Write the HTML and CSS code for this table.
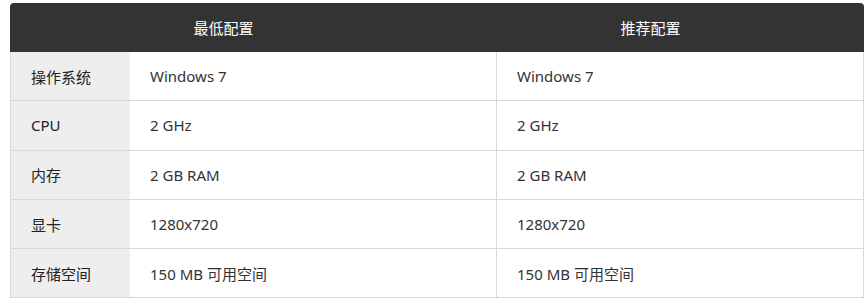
FILE: index.html
```html
<!DOCTYPE html>
<html lang="zh-CN">
<head>
<meta charset="utf-8">
<title>配置需求</title>
<link rel="stylesheet" href="styles.css">
</head>
<body>
<div class="specs">
  <div class="head">
    <div class="head-cell">最低配置</div>
    <div class="head-cell">推荐配置</div>
  </div>
  <div class="row">
    <div class="label">操作系统</div>
    <div class="val">Windows 7</div>
    <div class="val">Windows 7</div>
  </div>
  <div class="row">
    <div class="label">CPU</div>
    <div class="val">2 GHz</div>
    <div class="val">2 GHz</div>
  </div>
  <div class="row">
    <div class="label">内存</div>
    <div class="val">2 GB RAM</div>
    <div class="val">2 GB RAM</div>
  </div>
  <div class="row">
    <div class="label">显卡</div>
    <div class="val">1280x720</div>
    <div class="val">1280x720</div>
  </div>
  <div class="row">
    <div class="label">存储空间</div>
    <div class="val">150 MB 可用空间</div>
    <div class="val">150 MB 可用空间</div>
  </div>
</div>
</body>
</html>
```

FILE: styles.css
```css
* { box-sizing: border-box; }
html, body { margin: 0; background: #fff; }
body {
  padding: 3px 0 0 10px;
  font-family: "Noto Sans", "Noto Sans CJK SC", sans-serif;
  font-size: 15px;
  color: #333;
}
.specs {
  width: 854px;
}
.head {
  display: grid;
  grid-template-columns: 1fr 1fr;
  height: 49px;
  background: #333;
  border-radius: 4px 4px 0 0;
  color: #fff;
}
.head-cell {
  display: flex;
  align-items: center;
  justify-content: center;
  font-family: "Noto Sans CJK SC", sans-serif;
}
.row {
  display: grid;
  grid-template-columns: 120px 367px 367px;
  height: 49.3px;
  border-bottom: 1px solid #d9d9d9;
}
.label {
  display: flex;
  align-items: center;
  padding-left: 20px;
  background: #eee;
  border-left: 1px solid #d9d9d9;
  color: #222;
}
.val {
  display: flex;
  align-items: center;
  padding-left: 20px;
  border-right: 1px solid #d9d9d9;
}
```
